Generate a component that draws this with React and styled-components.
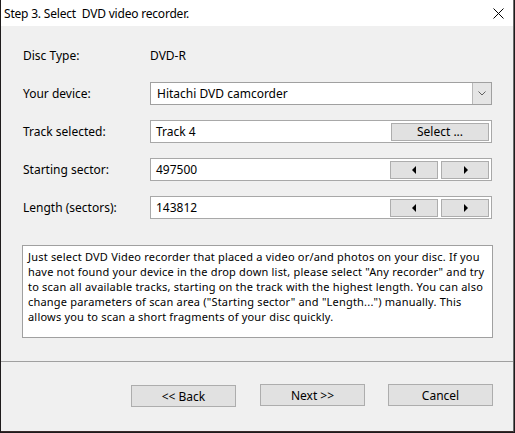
import React from "react"
import styled, { createGlobalStyle } from "styled-components"

const GlobalStyle = createGlobalStyle`
  html, body {
    margin: 0;
    padding: 0;
    background: #1e1b1c;
  }
  body {
    font-family: "Noto Sans", "Segoe UI", "Liberation Sans", sans-serif;
    font-size: 12px;
    color: #000;
  }
  * {
    box-sizing: border-box;
  }
`

const Window = styled.div`
  width: 513px;
  height: 432px;
  margin-left: 1px;
  background: #f0f0f0;
  display: flex;
  flex-direction: column;
  border-right: 1px solid #6b6b6b;
  border-bottom: 1px solid #3a2a2a;
`

const TitleBar = styled.div`
  height: 26px;
  flex: none;
  background: #fff;
  display: flex;
  align-items: center;
  justify-content: space-between;
  padding: 0 9px 0 3px;
`

const Title = styled.span`
  white-space: pre;
  letter-spacing: -0.2px;
`

const Close = styled.svg`
  width: 11px;
  height: 11px;
`

const Body = styled.div`
  flex: 1;
  padding: 18px 20px 0 21px;
`

const Form = styled.div`
  display: grid;
  grid-template-columns: 128px 342px;
  grid-auto-rows: 23px;
  row-gap: 15px;
  align-items: center;
`

const Label = styled.span`
  padding-left: 1px;
`

const Value = styled.span``

const Field = styled.div`
  height: 23px;
  background: #fff;
  border: 1px solid #a8a8a8;
  display: flex;
  align-items: center;
  padding: 2px 2px 2px 5px;
  gap: 3px;
`

const FieldText = styled.span`
  flex: 1;
`

const Combo = styled(Field)`
  padding: 0 0 0 6px;
  border-color: #a0a0a0;
`

const DropButton = styled.div`
  width: 19px;
  align-self: stretch;
  background: #e5e5e5;
  border-left: 1px solid #b8b8b8;
  display: flex;
  align-items: center;
  justify-content: center;
`

const SmallButton = styled.button`
  width: ${({ $width }) => $width}px;
  height: 18px;
  margin: 0;
  padding: 0;
  background: #e1e1e1;
  border: 1px solid #adadad;
  font: inherit;
  color: #000;
  display: flex;
  align-items: center;
  justify-content: center;
`

const Info = styled.div`
  margin-top: 26px;
  height: 93px;
  width: 471px;
  background: #fff;
  border: 1px solid #a0a0a0;
  padding: 3px 5px;
  font-size: 11px;
  line-height: 15px;
  letter-spacing: 0.2px;
  overflow: hidden;
`

const Line = styled.div`
  white-space: nowrap;
`

const Footer = styled.div`
  height: 70px;
  flex: none;
  border-top: 1px solid #a0a0a0;
  display: flex;
  justify-content: flex-end;
  align-items: flex-start;
  gap: 23px;
  padding: 22px 20px 0 0;
`

const DialogButton = styled.button`
  width: 105px;
  height: 22px;
  margin: ${({ $low }) => ($low ? "1px 1px 0 0" : "0")};
  padding: 0;
  background: #e1e1e1;
  border: 1px solid #adadad;
  font: inherit;
  color: #000;
`

const Arrow = ({ dir }) => (
  <svg width="5" height="8" viewBox="0 0 5 8">
    {dir === "left" ? (
      <path d="M4 0V8L0 4Z" fill="#000" />
    ) : (
      <path d="M1 0V8L5 4Z" fill="#000" />
    )}
  </svg>
)

const Stepper = () => (
  <>
    <SmallButton $width={48}>
      <Arrow dir="left" />
    </SmallButton>
    <SmallButton $width={48}>
      <Arrow dir="right" />
    </SmallButton>
  </>
)

const infoLines = [
  "Just select DVD Video recorder that placed a video or/and photos on your disc. If you",
  "have not found your device in the drop down list, please select \"Any recorder\" and try",
  "to scan all available tracks, starting on the track with the highest length. You can also",
  "change parameters of scan area (\"Starting sector\" and \"Length...\") manually. This",
  "allows you to scan a short fragments of your disc quickly.",
]

export default function App() {
  return (
    <>
      <GlobalStyle />
      <Window>
        <TitleBar>
          <Title>Step 3. Select  DVD video recorder.</Title>
          <Close viewBox="0 0 11 11">
            <path d="M0.5 0.5L10.5 10.5M10.5 0.5L0.5 10.5" stroke="#000" strokeWidth="1" />
          </Close>
        </TitleBar>
        <Body>
          <Form>
            <Label>Disc Type:</Label>
            <Value>DVD-R</Value>

            <Label>Your device:</Label>
            <Combo>
              <FieldText>Hitachi DVD camcorder</FieldText>
              <DropButton>
                <svg width="8" height="5" viewBox="0 0 8 5">
                  <path d="M0.5 0.5L4 4L7.5 0.5" stroke="#606060" fill="none" />
                </svg>
              </DropButton>
            </Combo>

            <Label>Track selected:</Label>
            <Field>
              <FieldText>Track 4</FieldText>
              <SmallButton $width={98}>Select ...</SmallButton>
            </Field>

            <Label>Starting sector:</Label>
            <Field>
              <FieldText>497500</FieldText>
              <Stepper />
            </Field>

            <Label>Length (sectors):</Label>
            <Field>
              <FieldText>143812</FieldText>
              <Stepper />
            </Field>
          </Form>
          <Info>
            {infoLines.map((line) => (
              <Line key={line}>{line}</Line>
            ))}
          </Info>
        </Body>
        <Footer>
          <DialogButton $low>&lt;&lt; Back</DialogButton>
          <DialogButton>Next &gt;&gt;</DialogButton>
          <DialogButton>Cancel</DialogButton>
        </Footer>
      </Window>
    </>
  )
}
